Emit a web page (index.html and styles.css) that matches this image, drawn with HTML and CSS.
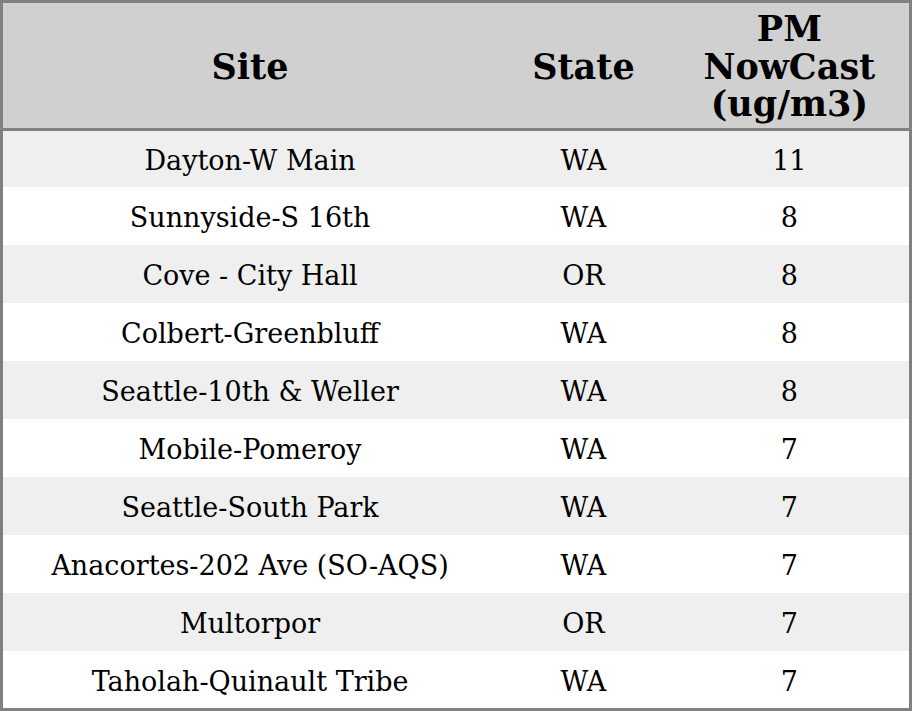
FILE: index.html
```html
<!DOCTYPE html>
<html>
<head>
<meta charset="utf-8">
<link rel="stylesheet" href="styles.css">
</head>
<body>
<table class="aq">
  <colgroup>
    <col class="c-site">
    <col class="c-state">
    <col class="c-pm">
  </colgroup>
  <thead>
    <tr class="head"><th>Site</th><th>State</th><th>PM<br>NowCast<br>(ug/m3)</th></tr>
  </thead>
  <tbody>
    <tr class="odd r-first"><td>Dayton-W Main</td><td>WA</td><td>11</td></tr>
    <tr class="even"><td>Sunnyside-S 16th</td><td>WA</td><td>8</td></tr>
    <tr class="odd"><td>Cove - City Hall</td><td>OR</td><td>8</td></tr>
    <tr class="even"><td>Colbert-Greenbluff</td><td>WA</td><td>8</td></tr>
    <tr class="odd"><td>Seattle-10th &amp; Weller</td><td>WA</td><td>8</td></tr>
    <tr class="even"><td>Mobile-Pomeroy</td><td>WA</td><td>7</td></tr>
    <tr class="odd"><td>Seattle-South Park</td><td>WA</td><td>7</td></tr>
    <tr class="even"><td>Anacortes-202 Ave (SO-AQS)</td><td>WA</td><td>7</td></tr>
    <tr class="odd"><td>Multorpor</td><td>OR</td><td>7</td></tr>
    <tr class="even r-last"><td>Taholah-Quinault Tribe</td><td>WA</td><td>7</td></tr>
  </tbody>
</table>
</body>
</html>
```
FILE: styles.css
```css
html, body {
  margin: 0;
  padding: 0;
  background: #ffffff;
}
.aq {
  width: 912px;
  border-collapse: collapse;
  border: 3px solid #808080;
  font-family: "DejaVu Serif", serif;
  color: #000000;
  table-layout: fixed;
}
.c-site { width: 494px; }
.c-state { width: 172px; }
.c-pm { width: 240px; }
.head th {
  background: #d0d0d0;
  font-weight: bold;
  font-size: 35px;
  line-height: 37.5px;
  height: 123px;
  padding: 2px 0 0 0;
  border-bottom: 3px solid #808080;
  text-align: center;
  vertical-align: middle;
}
.aq td {
  font-size: 27px;
  text-align: center;
  vertical-align: middle;
  padding: 3px 0 0 0;
  height: 55px;
}
.r-first td { height: 53px; }
.r-last td { height: 54px; }
.odd td { background: #efefef; }
.even td { background: #ffffff; }
```
